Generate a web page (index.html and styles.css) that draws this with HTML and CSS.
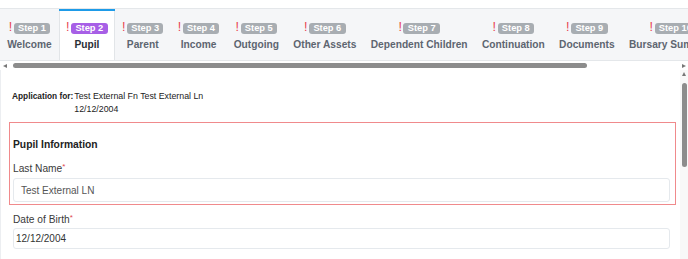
FILE: index.html
```html
<!DOCTYPE html>
<html lang="en">
<head>
<meta charset="utf-8">
<title>Pupil</title>
<link rel="stylesheet" href="styles.css">
</head>
<body>
<div class="page">
  <div class="topgap"></div>
  <nav class="tabs">
    <div class="tab"><div class="steprow"><span class="warn">!</span><span class="badge">Step 1</span></div><div class="label">Welcome</div></div>
    <div class="tab active"><div class="steprow"><span class="warn">!</span><span class="badge">Step 2</span></div><div class="label">Pupil</div></div>
    <div class="tab"><div class="steprow"><span class="warn">!</span><span class="badge">Step 3</span></div><div class="label">Parent</div></div>
    <div class="tab"><div class="steprow"><span class="warn">!</span><span class="badge">Step 4</span></div><div class="label">Income</div></div>
    <div class="tab"><div class="steprow"><span class="warn">!</span><span class="badge">Step 5</span></div><div class="label">Outgoing</div></div>
    <div class="tab"><div class="steprow"><span class="warn">!</span><span class="badge">Step 6</span></div><div class="label">Other Assets</div></div>
    <div class="tab"><div class="steprow"><span class="warn">!</span><span class="badge">Step 7</span></div><div class="label">Dependent Children</div></div>
    <div class="tab"><div class="steprow"><span class="warn">!</span><span class="badge">Step 8</span></div><div class="label">Continuation</div></div>
    <div class="tab"><div class="steprow"><span class="warn">!</span><span class="badge">Step 9</span></div><div class="label">Documents</div></div>
    <div class="tab"><div class="steprow"><span class="warn">!</span><span class="badge">Step 10</span></div><div class="label">Bursary Summary</div></div>
  </nav>
  <div class="hscroll">
    <span class="arrow-left"></span>
    <span class="hthumb"></span>
    <span class="arrow-right"></span>
  </div>
  <div class="main">
    <div class="content">
      <div class="appfor">
        <span class="appfor-label">Application for:</span>
        <div class="appfor-value">
          <div>Test External Fn Test External Ln</div>
          <div>12/12/2004</div>
        </div>
      </div>
      <section class="group invalid">
        <h3 class="group-title">Pupil Information</h3>
        <label class="field-label">Last Name<span class="req">*</span></label>
        <div class="input input-tall">Test External LN</div>
      </section>
      <div class="group plain">
        <label class="field-label">Date of Birth<span class="req">*</span></label>
        <div class="input input-short">12/12/2004</div>
      </div>
    </div>
    <div class="vscroll">
      <span class="arrow-up"></span>
      <span class="vthumb"></span>
    </div>
  </div>
</div>
</body>
</html>
```
FILE: styles.css
```css
* { box-sizing: border-box; }
html, body { margin: 0; padding: 0; background: #ffffff; }
body {
  font-family: "Liberation Sans", Arial, sans-serif;
  color: #333;
  width: 688px;
  height: 259px;
  overflow: hidden;
}
.page { width: 688px; }
.topgap { height: 8px; }

.tabs {
  display: flex;
  height: 53px;
  background: #f5f6f8;
  border-top: 1px solid #e4e7ea;
  border-bottom: 1px solid #e4e7ea;
  overflow: hidden;
  white-space: nowrap;
}
.tab {
  flex: none;
  display: flex;
  flex-direction: column;
  align-items: center;
  padding: 12px 7.2px 0;
}
.tab.active {
  background: #ffffff;
  box-shadow: inset 0 2px 0 #1e9be8, inset 1px 0 0 #e2e5e8, inset -1px 0 0 #e2e5e8;
}
.steprow {
  display: flex;
  align-items: baseline;
  height: 12px;
}
.warn {
  color: #e8434f;
  font-size: 12.5px;
  line-height: 12px;
  margin-right: 1.5px;
}
.badge {
  display: inline-block;
  background: #a8adb2;
  color: #fff;
  font-weight: bold;
  font-size: 9.3px;
  line-height: 10.5px;
  padding: 0 4.3px;
  border-radius: 3px;
}
.tab.active .badge { background: #a75fe6; }
.label {
  margin-top: 6px;
  font-size: 10.2px;
  line-height: 12px;
  font-weight: bold;
  color: #5d6570;
}
.tab.active .label { color: #2a2e35; }

.hscroll {
  height: 9px;
  display: flex;
  align-items: center;
}
.arrow-left {
  margin-left: 3px;
  width: 0; height: 0;
  border-top: 2.5px solid transparent;
  border-bottom: 2.5px solid transparent;
  border-right: 4px solid #777;
}
.hthumb {
  margin-left: 6px;
  width: 574px;
  height: 5px;
  border-radius: 3px;
  background: #8c8c8c;
}
.arrow-right {
  margin-left: auto;
  margin-right: 2px;
  width: 0; height: 0;
  border-top: 2.5px solid transparent;
  border-bottom: 2.5px solid transparent;
  border-left: 4px solid #777;
}

.main {
  display: flex;
  height: 189px;
  overflow: hidden;
}
.content {
  flex: 1;
  padding: 20px 4px 0 8px;
  border-left: 1px solid #eceef1;
}
.vscroll {
  width: 8px;
  background: #f8f8f8;
  display: flex;
  flex-direction: column;
  align-items: center;
}
.arrow-up {
  margin-top: 2px;
  width: 0; height: 0;
  border-left: 2.5px solid transparent;
  border-right: 2.5px solid transparent;
  border-bottom: 4px solid #777;
}
.vthumb {
  margin-top: 7px;
  width: 5px;
  height: 84px;
  border-radius: 3px;
  background: #8c8c8c;
}

.appfor {
  display: flex;
  align-items: flex-start;
  margin-left: 3px;
  line-height: 12.5px;
  color: #222;
}
.appfor-label {
  font-weight: bold;
  font-size: 8.3px;
  margin-right: 1px;
}
.appfor-value { font-size: 8.8px; }

.group.invalid {
  margin-top: 7px;
  border: 1px solid #f08a8c;
  padding: 15px 5.5px 2px 3px;
}
.group-title {
  margin: 0 0 9px;
  font-size: 10.3px;
  line-height: 13px;
  font-weight: bold;
  color: #222;
}
.field-label {
  display: block;
  font-size: 10.2px;
  line-height: 13px;
  color: #3a3a3a;
}
.req {
  color: #e0454f;
  font-size: 8px;
  vertical-align: 3px;
}
.input {
  border: 1px solid #e5e9ed;
  border-radius: 3px;
  background: #fff;
  font-size: 10px;
  display: flex;
  align-items: center;
}
.input-tall {
  margin-top: 3px;
  height: 24px;
  padding-left: 7px;
  color: #555;
}
.group.plain {
  margin-top: 5.5px;
  padding: 0 6.5px 0 4px;
}
.input-short {
  margin-top: 2.5px;
  height: 21px;
  padding-left: 2px;
  color: #333;
}
```
